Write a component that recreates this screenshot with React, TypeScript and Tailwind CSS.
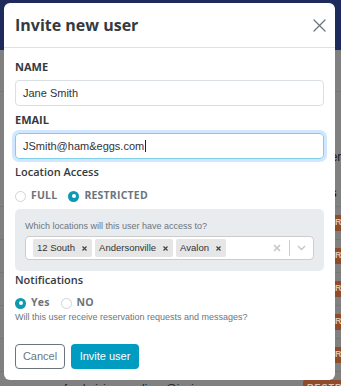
import React from "react";

const sans = { fontFamily: '"Open Sans", "Liberation Sans", sans-serif' };
const arial = { fontFamily: '"Liberation Sans", Arial, sans-serif' };

function Radio({ checked }: { checked?: boolean }) {
  return checked ? (
    <span className="flex h-[11px] w-[11px] shrink-0 items-center justify-center rounded-full bg-[#0f98b0]">
      <span className="block h-[4px] w-[4px] rounded-full bg-white" />
    </span>
  ) : (
    <span className="block h-[11px] w-[11px] shrink-0 rounded-full border border-[#ced4da] bg-white" />
  );
}

function Tag({ label }: { label: string }) {
  return (
    <span className="flex h-[18px] items-center rounded-[2px] bg-[#e6e6e6] pl-[4px] pr-[5px] text-[9.5px] text-[#333]">
      <span>{label}</span>
      <svg width="5" height="5" viewBox="0 0 5 5" className="ml-[7px]">
        <path d="M0.5 0.5 L4.5 4.5 M4.5 0.5 L0.5 4.5" stroke="#444" strokeWidth="1.2" />
      </svg>
    </span>
  );
}

function BgRow({ text }: { text: string }) {
  return (
    <div className="flex h-[33px] items-center border-t border-[#767676] pl-[64px]">
      <span className="w-[239px] shrink-0 whitespace-nowrap text-[11px] text-[#1a1a1a]" style={arial}>{text}</span>
      <span className="shrink-0 rounded-[2px] bg-[#8e4c2a] px-[4px] py-[1px] text-[9px] font-bold tracking-[1px] text-[#d8c3b6]" style={arial}>RESTRICTED</span>
    </div>
  );
}

export default function App() {
  return (
    <div className="relative h-[386px] w-[341px] overflow-hidden bg-[#808080]" style={arial}>
      {/* dimmed page behind */}
      <div className="flex flex-col">
        <div className="h-[50px] bg-[#1e2a5c]" />
        <div className="h-[42px] border-b border-[#767676]" />
        <div className="flex h-[114px] flex-col">
          <div className="mt-[57px] flex h-[16px] items-center pl-[318px] text-[12px] text-[#1a1a1a]">
            <span className="whitespace-nowrap">user</span>
          </div>
          <div className="mt-[20px] flex h-[16px] items-center pl-[300px] text-[12px] font-bold text-[#1a1a1a]">
            <span className="whitespace-nowrap">Status</span>
          </div>
        </div>
        <BgRow text="admin@jenis.com" />
        <BgRow text="chicago@jenis.com" />
        <BgRow text="nashville@jenis.com" />
        <BgRow text="columbus@jenis.com" />
        <BgRow text="events@jenis.com" />
        <BgRow text="fundraising.sandiego@jenis.com" />
      </div>

      {/* modal */}
      <div className="absolute left-[4px] top-[3px] w-[331px] rounded-[6px] bg-white">
        <div className="flex h-[45px] items-center justify-between border-b border-[#dee2e6] pl-[11px] pr-[9px]">
          <h2 className="text-[16px] font-bold text-[#343a40]" style={sans}>Invite new user</h2>
          <svg width="13" height="13" viewBox="0 0 13 13" className="mt-[1px]">
            <path d="M1 1 L12 12 M12 1 L1 12" stroke="#6c757d" strokeWidth="1.3" strokeLinecap="round" />
          </svg>
        </div>

        <div className="flex flex-col px-[11px] pb-[11px] pt-[11px]">
          <label className="h-[16px] text-[11px] font-bold leading-[16px] text-[#343a40]" style={sans}>NAME</label>
          <div className="mt-[5px] flex h-[26px] items-center rounded-[4px] border border-[#dadfe3] px-[7px] text-[11px] text-[#333]">Jane Smith</div>

          <label className="mt-[6px] h-[16px] text-[11px] font-bold leading-[16px] text-[#343a40]" style={sans}>EMAIL</label>
          <div className="mt-[5px] flex h-[26px] items-center rounded-[4px] border border-[#7fcde6] px-[7px] text-[11px] text-[#333] shadow-[0_0_0_3px_rgba(0,123,255,0.18)]">
            <span>JSmith@ham&amp;eggs.com</span>
            <span className="ml-[1px] h-[12px] w-px bg-[#222]" />
          </div>

          <div className="mt-[5px] h-[16px] text-[11px] font-semibold leading-[16px] text-[#343a40]" style={sans}>Location Access</div>
          <div className="mt-[9px] flex h-[14px] items-center text-[10.5px] font-bold tracking-[0.2px] text-[#6c757d]" style={sans}>
            <Radio />
            <span className="ml-[5px]">FULL</span>
            <span className="ml-[11px]"><Radio checked /></span>
            <span className="ml-[5px]">RESTRICTED</span>
          </div>

          <div className="mt-[6px] flex flex-col rounded-[5px] bg-[#e9ecef] px-[10px] pb-[11px] pt-[11px]">
            <div className="h-[12px] text-[9px] leading-[12px] text-[#6c757d]">Which locations will this user have access to?</div>
            <div className="mt-[4px] flex h-[24px] items-center rounded-[4px] border border-[#ccc] bg-white pl-[7px]">
              <div className="flex gap-[3px]">
                <Tag label="12 South" />
                <Tag label="Andersonville" />
                <Tag label="Avalon" />
              </div>
              <div className="ml-auto flex items-center">
                <svg width="8" height="8" viewBox="0 0 8 8">
                  <path d="M1 1 L7 7 M7 1 L1 7" stroke="#c4c4c4" strokeWidth="1.5" />
                </svg>
                <span className="ml-[8px] h-[16px] w-px bg-[#ccc]" />
                <svg width="9" height="6" viewBox="0 0 9 6" className="ml-[7px] mr-[7px]">
                  <path d="M1 1 L4.5 4.5 L8 1" stroke="#c4c4c4" strokeWidth="1.3" fill="none" />
                </svg>
              </div>
            </div>
          </div>

          <div className="mt-[1px] h-[16px] text-[11px] font-semibold leading-[16px] text-[#343a40]" style={sans}>Notifications</div>
          <div className="mt-[8px] flex h-[14px] items-center text-[10.5px] font-bold tracking-[0.2px] text-[#6c757d]" style={sans}>
            <Radio checked />
            <span className="ml-[5px]">Yes</span>
            <span className="ml-[11px]"><Radio /></span>
            <span className="ml-[5px]">NO</span>
          </div>
          <div className="mt-[1px] h-[12px] text-[9px] leading-[12px] text-[#6c757d]">Will this user receive reservation requests and messages?</div>

          <div className="mt-[21px] flex gap-[6px]">
            <button className="h-[25px] w-[50px] rounded-[4px] border border-[#6c757d] bg-white text-[11px] text-[#6c757d]" style={arial}>Cancel</button>
            <button className="h-[25px] w-[68px] rounded-[4px] bg-[#009bc1] text-[11px] text-white" style={arial}>Invite user</button>
          </div>
        </div>
      </div>
    </div>
  );
}
